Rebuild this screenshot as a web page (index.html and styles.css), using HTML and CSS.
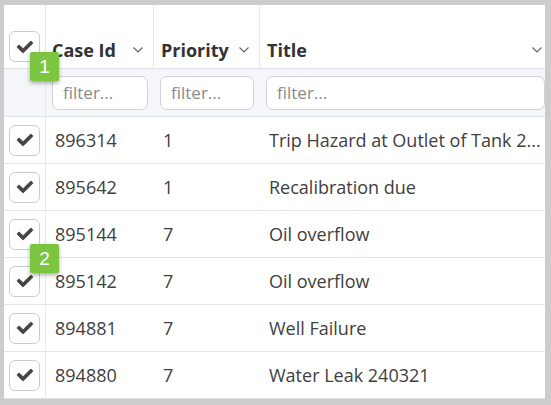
FILE: index.html
```html
<!DOCTYPE html>
<html>
<head>
<meta charset="utf-8">
<link rel="stylesheet" href="styles.css">
</head>
<body>
<div class="panel">
  <div class="grid">
    <div class="hcell sel"><span class="cb"><svg viewBox="0 60 512 392"><path d="M173.898 439.404l-166.4-166.4c-9.997-9.997-9.997-26.206 0-36.204l36.203-36.204c9.997-9.998 26.207-9.998 36.204 0L192 312.69 432.095 72.596c9.997-9.997 26.207-9.997 36.204 0l36.203 36.204c9.997 9.997 9.997 26.206 0 36.204l-294.4 294.401c-9.998 9.997-26.207 9.997-36.204-.001z"/></svg></span></div>
    <div class="hcell div"><span class="htext">Case Id</span><svg class="chev" viewBox="0 0 10 6"><path d="M0.5 0.5 L5 5 L9.5 0.5"/></svg></div>
    <div class="hcell div"><span class="htext">Priority</span><svg class="chev" viewBox="0 0 10 6"><path d="M0.5 0.5 L5 5 L9.5 0.5"/></svg></div>
    <div class="hcell last"><span class="htext">Title</span><svg class="chev" viewBox="0 0 10 6"><path d="M0.5 0.5 L5 5 L9.5 0.5"/></svg></div>

    <div class="fcell sel"></div>
    <div class="fcell"><input class="filter" placeholder="filter..."></div>
    <div class="fcell"><input class="filter" placeholder="filter..."></div>
    <div class="fcell"><input class="filter" placeholder="filter..."></div>

    <div class="cell sel"><span class="cb"><svg viewBox="0 60 512 392"><path d="M173.898 439.404l-166.4-166.4c-9.997-9.997-9.997-26.206 0-36.204l36.203-36.204c9.997-9.998 26.207-9.998 36.204 0L192 312.69 432.095 72.596c9.997-9.997 26.207-9.997 36.204 0l36.203 36.204c9.997 9.997 9.997 26.206 0 36.204l-294.4 294.401c-9.998 9.997-26.207 9.997-36.204-.001z"/></svg></span></div>
    <div class="cell">896314</div><div class="cell">1</div><div class="cell">Trip Hazard at Outlet of Tank 2...</div>

    <div class="cell sel"><span class="cb"><svg viewBox="0 60 512 392"><path d="M173.898 439.404l-166.4-166.4c-9.997-9.997-9.997-26.206 0-36.204l36.203-36.204c9.997-9.998 26.207-9.998 36.204 0L192 312.69 432.095 72.596c9.997-9.997 26.207-9.997 36.204 0l36.203 36.204c9.997 9.997 9.997 26.206 0 36.204l-294.4 294.401c-9.998 9.997-26.207 9.997-36.204-.001z"/></svg></span></div>
    <div class="cell">895642</div><div class="cell">1</div><div class="cell">Recalibration due</div>

    <div class="cell sel"><span class="cb"><svg viewBox="0 60 512 392"><path d="M173.898 439.404l-166.4-166.4c-9.997-9.997-9.997-26.206 0-36.204l36.203-36.204c9.997-9.998 26.207-9.998 36.204 0L192 312.69 432.095 72.596c9.997-9.997 26.207-9.997 36.204 0l36.203 36.204c9.997 9.997 9.997 26.206 0 36.204l-294.4 294.401c-9.998 9.997-26.207 9.997-36.204-.001z"/></svg></span></div>
    <div class="cell">895144</div><div class="cell">7</div><div class="cell">Oil overflow</div>

    <div class="cell sel"><span class="cb"><svg viewBox="0 60 512 392"><path d="M173.898 439.404l-166.4-166.4c-9.997-9.997-9.997-26.206 0-36.204l36.203-36.204c9.997-9.998 26.207-9.998 36.204 0L192 312.69 432.095 72.596c9.997-9.997 26.207-9.997 36.204 0l36.203 36.204c9.997 9.997 9.997 26.206 0 36.204l-294.4 294.401c-9.998 9.997-26.207 9.997-36.204-.001z"/></svg></span></div>
    <div class="cell">895142</div><div class="cell">7</div><div class="cell">Oil overflow</div>

    <div class="cell sel"><span class="cb"><svg viewBox="0 60 512 392"><path d="M173.898 439.404l-166.4-166.4c-9.997-9.997-9.997-26.206 0-36.204l36.203-36.204c9.997-9.998 26.207-9.998 36.204 0L192 312.69 432.095 72.596c9.997-9.997 26.207-9.997 36.204 0l36.203 36.204c9.997 9.997 9.997 26.206 0 36.204l-294.4 294.401c-9.998 9.997-26.207 9.997-36.204-.001z"/></svg></span></div>
    <div class="cell">894881</div><div class="cell">7</div><div class="cell">Well Failure</div>

    <div class="cell sel"><span class="cb"><svg viewBox="0 60 512 392"><path d="M173.898 439.404l-166.4-166.4c-9.997-9.997-9.997-26.206 0-36.204l36.203-36.204c9.997-9.998 26.207-9.998 36.204 0L192 312.69 432.095 72.596c9.997-9.997 26.207-9.997 36.204 0l36.203 36.204c9.997 9.997 9.997 26.206 0 36.204l-294.4 294.401c-9.998 9.997-26.207 9.997-36.204-.001z"/></svg></span></div>
    <div class="cell">894880</div><div class="cell">7</div><div class="cell">Water Leak 240321</div>
  </div>
  <div class="badge b1">1</div>
  <div class="badge b2">2</div>
</div>
</body>
</html>
```
FILE: styles.css
```css
html, body {
  margin: 0;
  padding: 0;
  background: #cccccc;
}
body {
  padding: 5px 6px 5px 4px;
  font-family: "Open Sans", "Noto Sans", sans-serif;
  color: #404040;
}
.panel {
  position: relative;
  width: 541px;
  height: 394px;
  background: #ffffff;
  overflow: hidden;
}
.grid {
  display: grid;
  grid-template-columns: 42px 108px 106px 291px;
  grid-template-rows: 64px 48px repeat(6, 47px);
  width: 547px;
}
.hcell {
  display: flex;
  align-items: flex-end;
  justify-content: space-between;
  padding: 0 10px 3px 6px;
  border-bottom: 1px solid #dfe3e9;
  box-sizing: border-box;
  background: #fff;
}
.hcell.div { border-right: 1px solid #e6e8ec; }
.hcell.last { padding-right: 9px; padding-left: 7px; }
.hcell.div + .hcell.div { padding-left: 7px; }
.hcell.sel {
  justify-content: center;
  padding: 0 0 6px 0;
  border-right: 1px solid #e6e8ec;
}
.htext {
  font-weight: 700;
  font-size: 18px;
  line-height: 30px;
  color: #333;
}
.chev {
  width: 10px;
  height: 6px;
  margin-bottom: 12px;
  fill: none;
  stroke: #666;
  stroke-width: 1.2;
}
.fcell {
  display: flex;
  align-items: center;
  padding: 0 6px;
  background: #f4f6f9;
  border-bottom: 1px solid #dfe3e9;
  box-sizing: border-box;
}
.fcell.sel { border-right: 1px solid #e6e8ec; }
.filter {
  width: 100%;
  height: 34px;
  box-sizing: border-box;
  border: 1px solid #cfd2d6;
  border-radius: 7px;
  background: #fff;
  padding: 0 10px;
  font-family: "Open Sans", "Noto Sans", sans-serif;
  font-size: 17px;
  color: #333;
  outline: none;
}
.filter::placeholder { color: #8a8a8a; }
.cell {
  display: flex;
  align-items: center;
  padding: 0 8px 0 9px;
  font-size: 18px;
  border-bottom: 1px solid #e1e4ea;
  box-sizing: border-box;
  white-space: nowrap;
  overflow: hidden;
}
.cell.sel {
  justify-content: center;
  padding: 0;
  border-right: 1px solid #e6e8ec;
}
.cb {
  width: 31px;
  height: 31px;
  box-sizing: border-box;
  border: 1px solid #c9ccd0;
  border-radius: 6px;
  background: #fff;
  display: flex;
  align-items: center;
  justify-content: center;
}
.cb svg {
  width: 16px;
  height: 12px;
  fill: #444;
  stroke: #444;
  stroke-width: 28;
  stroke-linejoin: round;
  overflow: visible;
}
.badge {
  position: absolute;
  left: 26px;
  width: 29px;
  height: 29px;
  background: #7cc540;
  color: #fff;
  border-radius: 2px;
  box-shadow: 0 2px 4px rgba(0, 0, 0, 0.35);
  font-family: "Liberation Sans", Arial, sans-serif;
  font-size: 19px;
  line-height: 29px;
  text-align: center;
}
.b1 { top: 47px; }
.b2 { top: 239px; }
```
